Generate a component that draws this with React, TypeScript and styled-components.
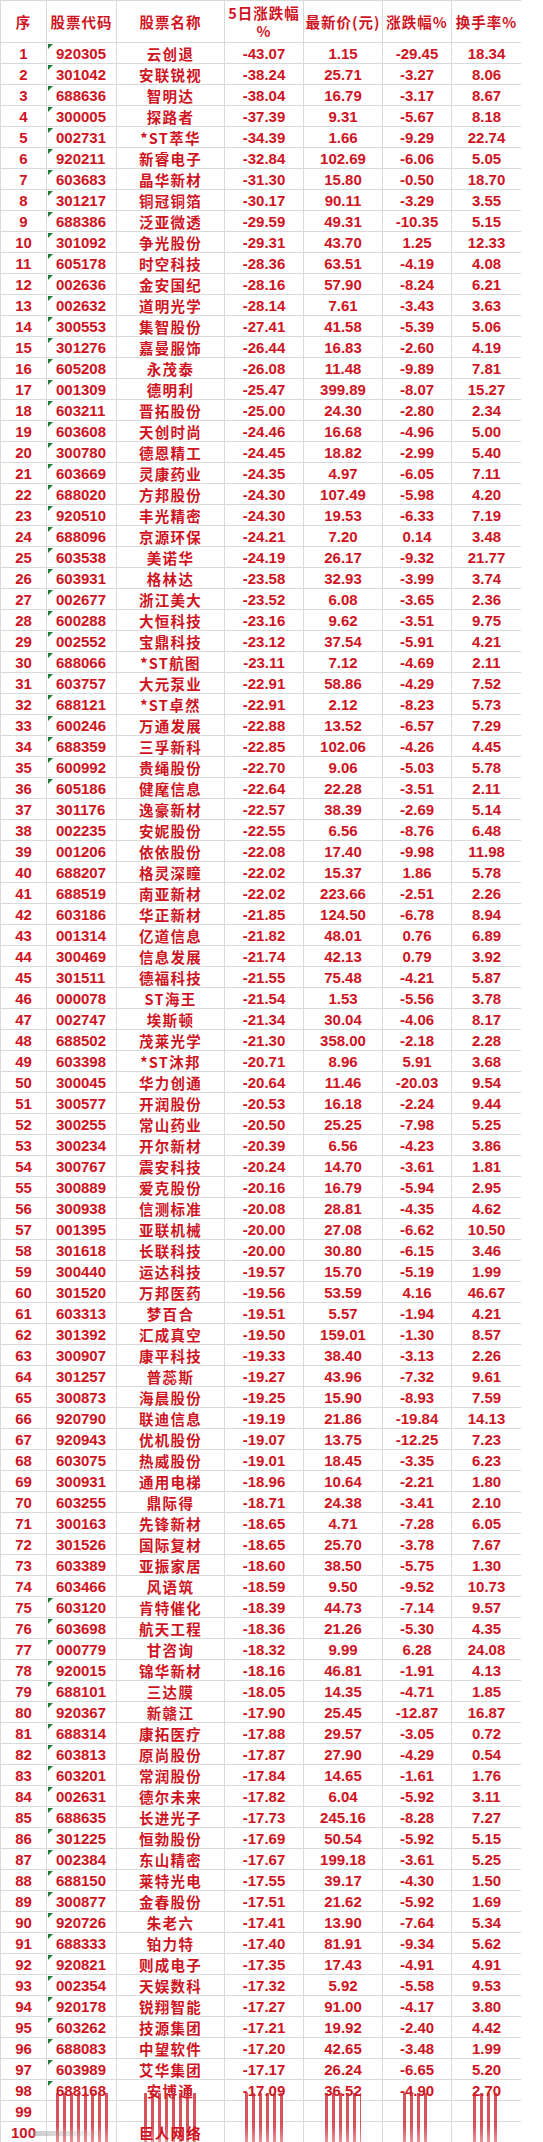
import React from "react";
import styled, { createGlobalStyle, css } from "styled-components";

const GlobalStyle = createGlobalStyle`
  html, body { margin: 0; padding: 0; background: #fff; }
  body { font-family: "Liberation Sans", Arial, sans-serif; }
`;

const RED = "#d0141f";
const LINE = "#d9d9d9";
const COLS = "46px 70px 108px 79px 79px 69px 70px";

const Sheet = styled.div`
  width: 521px;
  height: 2142px;
  overflow: hidden;
  border-top: 1px solid ${LINE};
  box-sizing: border-box;
`;

const Row = styled.div<{ $head?: boolean }>`
  display: grid;
  grid-template-columns: ${COLS};
  height: ${(p) => (p.$head ? "42px" : "21px")};
  border-bottom: 1px solid ${LINE};
  box-sizing: border-box;
`;

const Cell = styled.div<{ $left?: boolean; $flag?: boolean }>`
  position: relative;
  display: flex;
  align-items: center;
  justify-content: ${(p) => (p.$left ? "flex-start" : "center")};
  padding-left: ${(p) => (p.$left ? "9px" : "0")};
  border-left: 1px solid ${LINE};
  color: ${RED};
  font-family: "Liberation Sans", Arial, sans-serif;
  font-weight: bold;
  font-size: 15px;
  white-space: nowrap;
  box-sizing: border-box;
  ${(p) =>
    p.$flag &&
    css`
      &::before {
        content: "";
        position: absolute;
        left: 1px;
        top: 1px;
        width: 0;
        height: 0;
        border-top: 5px solid #1e7b34;
        border-right: 5px solid transparent;
      }
    `}
`;

const Name = styled.span`
  font-family: "Noto Sans CJK SC", "Liberation Sans", sans-serif;
  font-weight: bold;
  font-size: 14.5px;
  letter-spacing: 1.3px;
`;

const HeadCell = styled.div`
  display: flex;
  align-items: center;
  justify-content: center;
  text-align: center;
  border-left: 1px solid ${LINE};
  color: ${RED};
  font-family: "Noto Sans CJK SC", "Liberation Sans", sans-serif;
  font-weight: bold;
  font-size: 14.5px;
  line-height: 18px;
  letter-spacing: 1px;
  box-sizing: border-box;
  white-space: nowrap;
`;

const Streak = styled.span<{ $w: number }>`
  position: absolute;
  top: -8px;
  left: 50%;
  width: ${(p) => p.$w}px;
  height: 60px;
  transform: translateX(-50%);
  background: repeating-linear-gradient(
    90deg,
    rgba(206, 40, 50, 0.8) 0 3px,
    rgba(255, 255, 255, 0) 3px 7px
  );
  -webkit-mask-image: linear-gradient(180deg, #000 0%, #000 55%, rgba(0, 0, 0, 0.35) 100%);
  mask-image: linear-gradient(180deg, #000 0%, #000 55%, rgba(0, 0, 0, 0.35) 100%);
  pointer-events: none;
`;

const Smear = styled.span`
  position: absolute;
  left: -14px;
  top: 9px;
  width: 70px;
  height: 5px;
  background: linear-gradient(90deg, rgba(150, 150, 150, 0.5), rgba(200, 200, 200, 0.1));
`;

type Item = [string, string, string, string, string, string];

const data: Item[] = [
  ["920305", "云创退", "-43.07", "1.15", "-29.45", "18.34"],
  ["301042", "安联锐视", "-38.24", "25.71", "-3.27", "8.06"],
  ["688636", "智明达", "-38.04", "16.79", "-3.17", "8.67"],
  ["300005", "探路者", "-37.39", "9.31", "-5.67", "8.18"],
  ["002731", "*ST萃华", "-34.39", "1.66", "-9.29", "22.74"],
  ["920211", "新睿电子", "-32.84", "102.69", "-6.06", "5.05"],
  ["603683", "晶华新材", "-31.30", "15.80", "-0.50", "18.70"],
  ["301217", "铜冠铜箔", "-30.17", "90.11", "-3.29", "3.55"],
  ["688386", "泛亚微透", "-29.59", "49.31", "-10.35", "5.15"],
  ["301092", "争光股份", "-29.31", "43.70", "1.25", "12.33"],
  ["605178", "时空科技", "-28.36", "63.51", "-4.19", "4.08"],
  ["002636", "金安国纪", "-28.16", "57.90", "-8.24", "6.21"],
  ["002632", "道明光学", "-28.14", "7.61", "-3.43", "3.63"],
  ["300553", "集智股份", "-27.41", "41.58", "-5.39", "5.06"],
  ["301276", "嘉曼服饰", "-26.44", "16.83", "-2.60", "4.19"],
  ["605208", "永茂泰", "-26.08", "11.48", "-9.89", "7.81"],
  ["001309", "德明利", "-25.47", "399.89", "-8.07", "15.27"],
  ["603211", "晋拓股份", "-25.00", "24.30", "-2.80", "2.34"],
  ["603608", "天创时尚", "-24.46", "16.68", "-4.96", "5.00"],
  ["300780", "德恩精工", "-24.45", "18.82", "-2.99", "5.40"],
  ["603669", "灵康药业", "-24.35", "4.97", "-6.05", "7.11"],
  ["688020", "方邦股份", "-24.30", "107.49", "-5.98", "4.20"],
  ["920510", "丰光精密", "-24.30", "19.53", "-6.33", "7.19"],
  ["688096", "京源环保", "-24.21", "7.20", "0.14", "3.48"],
  ["603538", "美诺华", "-24.19", "26.17", "-9.32", "21.77"],
  ["603931", "格林达", "-23.58", "32.93", "-3.99", "3.74"],
  ["002677", "浙江美大", "-23.52", "6.08", "-3.65", "2.36"],
  ["600288", "大恒科技", "-23.16", "9.62", "-3.51", "9.75"],
  ["002552", "宝鼎科技", "-23.12", "37.54", "-5.91", "4.21"],
  ["688066", "*ST航图", "-23.11", "7.12", "-4.69", "2.11"],
  ["603757", "大元泵业", "-22.91", "58.86", "-4.29", "7.52"],
  ["688121", "*ST卓然", "-22.91", "2.12", "-8.23", "5.73"],
  ["600246", "万通发展", "-22.88", "13.52", "-6.57", "7.29"],
  ["688359", "三孚新科", "-22.85", "102.06", "-4.26", "4.45"],
  ["600992", "贵绳股份", "-22.70", "9.06", "-5.03", "5.78"],
  ["605186", "健麾信息", "-22.64", "22.28", "-3.51", "2.11"],
  ["301176", "逸豪新材", "-22.57", "38.39", "-2.69", "5.14"],
  ["002235", "安妮股份", "-22.55", "6.56", "-8.76", "6.48"],
  ["001206", "依依股份", "-22.08", "17.40", "-9.98", "11.98"],
  ["688207", "格灵深瞳", "-22.02", "15.37", "1.86", "5.78"],
  ["688519", "南亚新材", "-22.02", "223.66", "-2.51", "2.26"],
  ["603186", "华正新材", "-21.85", "124.50", "-6.78", "8.94"],
  ["001314", "亿道信息", "-21.82", "48.01", "0.76", "6.89"],
  ["300469", "信息发展", "-21.74", "42.13", "0.79", "3.92"],
  ["301511", "德福科技", "-21.55", "75.48", "-4.21", "5.87"],
  ["000078", "ST海王", "-21.54", "1.53", "-5.56", "3.78"],
  ["002747", "埃斯顿", "-21.34", "30.04", "-4.06", "8.17"],
  ["688502", "茂莱光学", "-21.30", "358.00", "-2.18", "2.28"],
  ["603398", "*ST沐邦", "-20.71", "8.96", "5.91", "3.68"],
  ["300045", "华力创通", "-20.64", "11.46", "-20.03", "9.54"],
  ["300577", "开润股份", "-20.53", "16.18", "-2.24", "9.44"],
  ["300255", "常山药业", "-20.50", "25.25", "-7.98", "5.25"],
  ["300234", "开尔新材", "-20.39", "6.56", "-4.23", "3.86"],
  ["300767", "震安科技", "-20.24", "14.70", "-3.61", "1.81"],
  ["300889", "爱克股份", "-20.16", "16.79", "-5.94", "2.95"],
  ["300938", "信测标准", "-20.08", "28.81", "-4.35", "4.62"],
  ["001395", "亚联机械", "-20.00", "27.08", "-6.62", "10.50"],
  ["301618", "长联科技", "-20.00", "30.80", "-6.15", "3.46"],
  ["300440", "运达科技", "-19.57", "15.70", "-5.19", "1.99"],
  ["301520", "万邦医药", "-19.56", "53.59", "4.16", "46.67"],
  ["603313", "梦百合", "-19.51", "5.57", "-1.94", "4.21"],
  ["301392", "汇成真空", "-19.50", "159.01", "-1.30", "8.57"],
  ["300907", "康平科技", "-19.33", "38.40", "-3.13", "2.26"],
  ["301257", "普蕊斯", "-19.27", "43.96", "-7.32", "9.61"],
  ["300873", "海晨股份", "-19.25", "15.90", "-8.93", "7.59"],
  ["920790", "联迪信息", "-19.19", "21.86", "-19.84", "14.13"],
  ["920943", "优机股份", "-19.07", "13.75", "-12.25", "7.23"],
  ["603075", "热威股份", "-19.01", "18.45", "-3.35", "6.23"],
  ["300931", "通用电梯", "-18.96", "10.64", "-2.21", "1.80"],
  ["603255", "鼎际得", "-18.71", "24.38", "-3.41", "2.10"],
  ["300163", "先锋新材", "-18.65", "4.71", "-7.28", "6.05"],
  ["301526", "国际复材", "-18.65", "25.70", "-3.78", "7.67"],
  ["603389", "亚振家居", "-18.60", "38.50", "-5.75", "1.30"],
  ["603466", "风语筑", "-18.59", "9.50", "-9.52", "10.73"],
  ["603120", "肯特催化", "-18.39", "44.73", "-7.14", "9.57"],
  ["603698", "航天工程", "-18.36", "21.26", "-5.30", "4.35"],
  ["000779", "甘咨询", "-18.32", "9.99", "6.28", "24.08"],
  ["920015", "锦华新材", "-18.16", "46.81", "-1.91", "4.13"],
  ["688101", "三达膜", "-18.05", "14.35", "-4.71", "1.85"],
  ["920367", "新赣江", "-17.90", "25.45", "-12.87", "16.87"],
  ["688314", "康拓医疗", "-17.88", "29.57", "-3.05", "0.72"],
  ["603813", "原尚股份", "-17.87", "27.90", "-4.29", "0.54"],
  ["603201", "常润股份", "-17.84", "14.65", "-1.61", "1.76"],
  ["002631", "德尔未来", "-17.82", "6.04", "-5.92", "3.11"],
  ["688635", "长进光子", "-17.73", "245.16", "-8.28", "7.27"],
  ["301225", "恒勃股份", "-17.69", "50.54", "-5.92", "5.15"],
  ["002384", "东山精密", "-17.67", "199.18", "-3.61", "5.25"],
  ["688150", "莱特光电", "-17.55", "39.17", "-4.30", "1.50"],
  ["300877", "金春股份", "-17.51", "21.62", "-5.92", "1.69"],
  ["920726", "朱老六", "-17.41", "13.90", "-7.64", "5.34"],
  ["688333", "铂力特", "-17.40", "81.91", "-9.34", "5.62"],
  ["920821", "则成电子", "-17.35", "17.43", "-4.91", "4.91"],
  ["002354", "天娱数科", "-17.32", "5.92", "-5.58", "9.53"],
  ["920178", "锐翔智能", "-17.27", "91.00", "-4.17", "3.80"],
  ["603262", "技源集团", "-17.21", "19.92", "-2.40", "4.42"],
  ["688083", "中望软件", "-17.20", "42.65", "-3.48", "1.99"],
  ["603989", "艾华集团", "-17.17", "26.24", "-6.65", "5.20"],
  ["688168", "安博通", "-17.09", "36.52", "-4.90", "2.70"],
];

// rows that carry the green "number stored as text" marker
const flagged = (n: number) => n <= 36 || (n >= 75 && n <= 98);

export default function App() {
  return (
    <>
      <GlobalStyle />
      <Sheet>
        <Row $head>
          <HeadCell>序</HeadCell>
          <HeadCell>股票代码</HeadCell>
          <HeadCell>股票名称</HeadCell>
          <HeadCell>
            5日涨跌幅
            <br />%
          </HeadCell>
          <HeadCell>最新价(元)</HeadCell>
          <HeadCell>涨跌幅%</HeadCell>
          <HeadCell>换手率%</HeadCell>
        </Row>

        {data.map((d, i) => (
          <Row key={i}>
            <Cell>{i + 1}</Cell>
            <Cell $left $flag={flagged(i + 1)}>{d[0]}</Cell>
            <Cell>
              <Name>{d[1]}</Name>
            </Cell>
            <Cell>{d[2]}</Cell>
            <Cell>{d[3]}</Cell>
            <Cell>{d[4]}</Cell>
            <Cell>{d[5]}</Cell>
          </Row>
        ))}

        {/* smeared tail of the screenshot */}
        <Row>
          <Cell>99</Cell>
          <Cell>
            <Streak $w={52} />
          </Cell>
          <Cell>
            <Streak $w={54} />
          </Cell>
          <Cell>
            <Streak $w={38} />
          </Cell>
          <Cell>
            <Streak $w={36} />
          </Cell>
          <Cell>
            <Streak $w={28} />
          </Cell>
          <Cell>
            <Streak $w={28} />
          </Cell>
        </Row>
        <Row>
          <Cell>100</Cell>
          <Cell>
            <Smear />
          </Cell>
          <Cell>
            <Name>巨人网络</Name>
          </Cell>
          <Cell />
          <Cell />
          <Cell />
          <Cell />
        </Row>
      </Sheet>
    </>
  );
}
